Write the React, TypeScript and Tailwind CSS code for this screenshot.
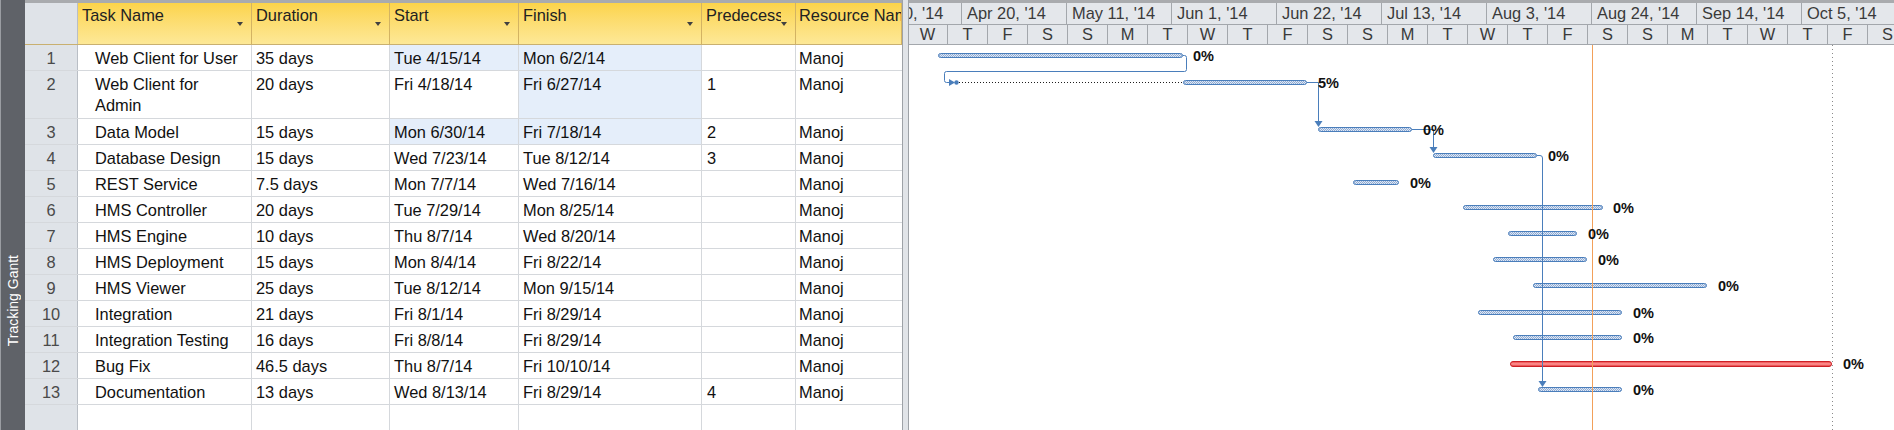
import React from "react";

type Row = {
  n: number;
  name: string[];
  dur: string;
  start: string;
  finish: string;
  pred: string;
  sHi?: boolean;
  fHi?: boolean;
  tall?: boolean;
};

const rows: Row[] = [
  { n: 1, name: ["Web Client for User"], dur: "35 days", start: "Tue 4/15/14", finish: "Mon 6/2/14", pred: "", sHi: true, fHi: true },
  { n: 2, name: ["Web Client for", "Admin"], dur: "20 days", start: "Fri 4/18/14", finish: "Fri 6/27/14", pred: "1", fHi: true, tall: true },
  { n: 3, name: ["Data Model"], dur: "15 days", start: "Mon 6/30/14", finish: "Fri 7/18/14", pred: "2", sHi: true, fHi: true },
  { n: 4, name: ["Database Design"], dur: "15 days", start: "Wed 7/23/14", finish: "Tue 8/12/14", pred: "3" },
  { n: 5, name: ["REST Service"], dur: "7.5 days", start: "Mon 7/7/14", finish: "Wed 7/16/14", pred: "" },
  { n: 6, name: ["HMS Controller"], dur: "20 days", start: "Tue 7/29/14", finish: "Mon 8/25/14", pred: "" },
  { n: 7, name: ["HMS Engine"], dur: "10 days", start: "Thu 8/7/14", finish: "Wed 8/20/14", pred: "" },
  { n: 8, name: ["HMS Deployment"], dur: "15 days", start: "Mon 8/4/14", finish: "Fri 8/22/14", pred: "" },
  { n: 9, name: ["HMS Viewer"], dur: "25 days", start: "Tue 8/12/14", finish: "Mon 9/15/14", pred: "" },
  { n: 10, name: ["Integration"], dur: "21 days", start: "Fri 8/1/14", finish: "Fri 8/29/14", pred: "" },
  { n: 11, name: ["Integration Testing"], dur: "16 days", start: "Fri 8/8/14", finish: "Fri 8/29/14", pred: "" },
  { n: 12, name: ["Bug Fix"], dur: "46.5 days", start: "Thu 8/7/14", finish: "Fri 10/10/14", pred: "" },
  { n: 13, name: ["Documentation"], dur: "13 days", start: "Wed 8/13/14", finish: "Fri 8/29/14", pred: "4" },
];

const tier1 = ["Mar 30, '14", "Apr 20, '14", "May 11, '14", "Jun 1, '14", "Jun 22, '14", "Jul 13, '14", "Aug 3, '14", "Aug 24, '14", "Sep 14, '14", "Oct 5, '14"];
const tier2 = "W T F S S M T W T F S S M T W T F S S M T W T F S".split(" ");

type Bar = { x1: number; x2: number; top: number; label: string; lx: number; red?: boolean };
const bars: Bar[] = [
  { x1: 938, x2: 1183, top: 53, label: "0%", lx: 1193 },
  { x1: 1183, x2: 1307, top: 80, label: "5%", lx: 1318 },
  { x1: 1318, x2: 1412, top: 127, label: "0%", lx: 1423 },
  { x1: 1433, x2: 1537, top: 153, label: "0%", lx: 1548 },
  { x1: 1353, x2: 1399, top: 180, label: "0%", lx: 1410 },
  { x1: 1463, x2: 1603, top: 205, label: "0%", lx: 1613 },
  { x1: 1508, x2: 1577, top: 231, label: "0%", lx: 1588 },
  { x1: 1493, x2: 1587, top: 257, label: "0%", lx: 1598 },
  { x1: 1533, x2: 1707, top: 283, label: "0%", lx: 1718 },
  { x1: 1478, x2: 1622, top: 310, label: "0%", lx: 1633 },
  { x1: 1513, x2: 1622, top: 335, label: "0%", lx: 1633 },
  { x1: 1510, x2: 1832, top: 361, label: "0%", lx: 1843, red: true },
  { x1: 1538, x2: 1622, top: 387, label: "0%", lx: 1633 },
];

const Arrow = () => (
  <div className="mt-[19px] mr-[8px] h-0 w-0 shrink-0 border-x-[3px] border-t-[4px] border-x-transparent border-t-[#404040]" />
);

function HeaderCell({ label, arrow = true, pl = "pl-[4px]" }: { label: string; arrow?: boolean; pl?: string }) {
  return (
    <div className={`flex min-w-0 border-r border-[#d3b362] ${pl}`}>
      <div className="min-w-0 flex-1 overflow-hidden whitespace-nowrap pt-[2px] leading-[21px] text-[#222]">{label}</div>
      {arrow && <Arrow />}
    </div>
  );
}

const cols = "grid grid-cols-[53px_174px_138px_129px_183px_94px_106px]";

function Gantt() {
  const blue = "#4a7ebb";
  return (
    <svg width={985} height={385} className="block">
      <defs>
        <pattern id="hatch" width="2" height="2" patternUnits="userSpaceOnUse">
          <rect width="2" height="2" fill="#dfe8f4" />
          <rect width="1" height="1" fill="#8eaad3" />
          <rect x="1" y="1" width="1" height="1" fill="#8eaad3" />
        </pattern>
        <linearGradient id="redg" x1="0" y1="0" x2="0" y2="1">
          <stop offset="0" stopColor="#e83a3a" />
          <stop offset="0.5" stopColor="#ff9a9a" />
          <stop offset="1" stopColor="#e02a2a" />
        </linearGradient>
      </defs>
      <g transform="translate(-909,-45)">
        {bars.map((b, i) =>
          b.red ? (
            <rect key={i} x={b.x1 + 0.5} y={b.top + 0.5} width={b.x2 - b.x1 - 1} height={5} rx={2.5} fill="url(#redg)" stroke="#cc2026" />
          ) : (
            <rect key={i} x={b.x1 + 0.5} y={b.top + 0.5} width={b.x2 - b.x1 - 1} height={4} rx={2} fill="url(#hatch)" stroke={blue} />
          )
        )}
        <line x1={959} y1={82.5} x2={1183} y2={82.5} stroke="#1e1e1e" strokeDasharray="1 2" />
        <g fill="none" stroke={blue} strokeWidth={1}>
          <path d="M1183 55.5 H1184.5 Q1186.5 55.5 1186.5 57.5 V69.5 Q1186.5 71.5 1184.5 71.5 H946.5 Q944.5 71.5 944.5 73.5 V80.5 Q944.5 82.5 946.5 82.5 H950" />
          <path d="M1307 82.5 H1318.5 V122" />
          <path d="M1412 129.5 H1433.5 V148" />
          <path d="M1537 155.5 H1540 Q1542.5 155.5 1542.5 158 V382" />
        </g>
        <g fill={blue}>
          <polygon points="949,79 955,82.5 949,86" />
          <circle cx={956.5} cy={82.5} r={2.2} />
          <polygon points="1314.5,121 1322.5,121 1318.5,127" />
          <polygon points="1429.5,147 1437.5,147 1433.5,153" />
          <polygon points="1538.5,381 1546.5,381 1542.5,387" />
        </g>
        <line x1={1592.5} y1={45} x2={1592.5} y2={430} stroke="#f2a05a" />
        <line x1={1832.5} y1={45} x2={1832.5} y2={430} stroke="#8a8a8a" strokeDasharray="1 3" />
        {bars.map((b, i) => (
          <text
            key={"t" + i}
            x={b.lx}
            y={b.top + 3}
            dominantBaseline="central"
            fontFamily="'Liberation Sans', Arial, sans-serif"
            fontWeight={700}
            fontSize={14.5}
            fill="#111"
          >
            {b.label}
          </text>
        ))}
      </g>
    </svg>
  );
}

export default function App() {
  return (
    <div className="flex h-[430px] w-[1894px] overflow-hidden bg-white font-['Liberation_Sans',Arial,sans-serif] text-[16.4px] text-[#111]">
      <div className="flex w-[25px] shrink-0 flex-col items-center justify-end border-l border-[#9a9da2] bg-[#5f6268] pb-[84px]">
        <span className="rotate-180 text-[14px] leading-[16px] text-white [writing-mode:vertical-rl]">Tracking Gantt</span>
      </div>

      <div className="flex w-[877px] shrink-0 flex-col">
        <div className="h-[3px] bg-[#a9abae]" />
        <div className={`${cols} h-[42px] border-b border-[#c9b070] bg-gradient-to-b from-[#fcd449] to-[#fde896]`}>
          <div className="border-r border-[#b9bec5] bg-[#dfe3e8]" />
          <HeaderCell label="Task Name" />
          <HeaderCell label="Duration" />
          <HeaderCell label="Start" />
          <HeaderCell label="Finish" />
          <HeaderCell label="Predecessors" />
          <HeaderCell label="Resource Name" arrow={false} pl="pl-[3px]" />
        </div>
        {rows.map((r) => (
          <div key={r.n} className={`${cols} ${r.tall ? "h-[48px]" : "h-[26px]"} border-b border-[#d5d8dc] leading-[21px]`}>
            <div className="border-r border-[#b9bec5] bg-[#dfe3e8] pt-[3px] text-center text-[#4a4a4a]">{r.n}</div>
            <div className="border-r border-[#d5d8dc] pl-[17px] pt-[3px] whitespace-nowrap">
              {r.name.map((l, i) => (
                <div key={i}>{l}</div>
              ))}
            </div>
            <div className="border-r border-[#d5d8dc] pl-[4px] pt-[3px]">{r.dur}</div>
            <div className={`border-r border-[#d5d8dc] pl-[4px] pt-[3px] ${r.sHi ? "bg-[#e5eefa]" : ""}`}>{r.start}</div>
            <div className={`border-r border-[#d5d8dc] pl-[4px] pt-[3px] ${r.fHi ? "bg-[#e5eefa]" : ""}`}>{r.finish}</div>
            <div className="border-r border-[#d5d8dc] pl-[5px] pt-[3px]">{r.pred}</div>
            <div className="pl-[3px] pt-[3px]">Manoj</div>
          </div>
        ))}
        <div className={`${cols} flex-1`}>
          <div className="border-r border-[#b9bec5] bg-[#dfe3e8]" />
          <div className="border-r border-[#d5d8dc]" />
          <div className="border-r border-[#d5d8dc]" />
          <div className="border-r border-[#d5d8dc]" />
          <div className="border-r border-[#d5d8dc]" />
          <div className="border-r border-[#d5d8dc]" />
          <div />
        </div>
      </div>

      <div className="w-[7px] shrink-0 border-x border-[#9ea2a7] bg-[#e1e4e8]" />

      <div className="flex min-w-0 flex-1 flex-col overflow-hidden">
        <div className="h-[3px] bg-[#a9abae]" />
        <div className="flex h-[22px] shrink-0 border-b border-[#a3a7ac] bg-[#e4e7eb] text-[#3a3a3a]">
          {tier1.map((t, i) => (
            <div key={t} className={`w-[105px] shrink-0 overflow-hidden whitespace-nowrap border-r border-[#a3a7ac] pl-[5px] leading-[21px] ${i === 0 ? "ml-[-52px]" : ""}`}>
              {t}
            </div>
          ))}
        </div>
        <div className="flex h-[20px] shrink-0 border-b border-[#a3a7ac] bg-[#e4e7eb] text-[#3a3a3a]">
          {tier2.map((t, i) => (
            <div key={i} className={`w-[40px] shrink-0 border-r border-[#a3a7ac] text-center leading-[19px] ${i === 0 ? "ml-[-1px]" : ""}`}>
              {t}
            </div>
          ))}
        </div>
        <div className="flex-1 bg-white">
          <Gantt />
        </div>
      </div>
    </div>
  );
}
